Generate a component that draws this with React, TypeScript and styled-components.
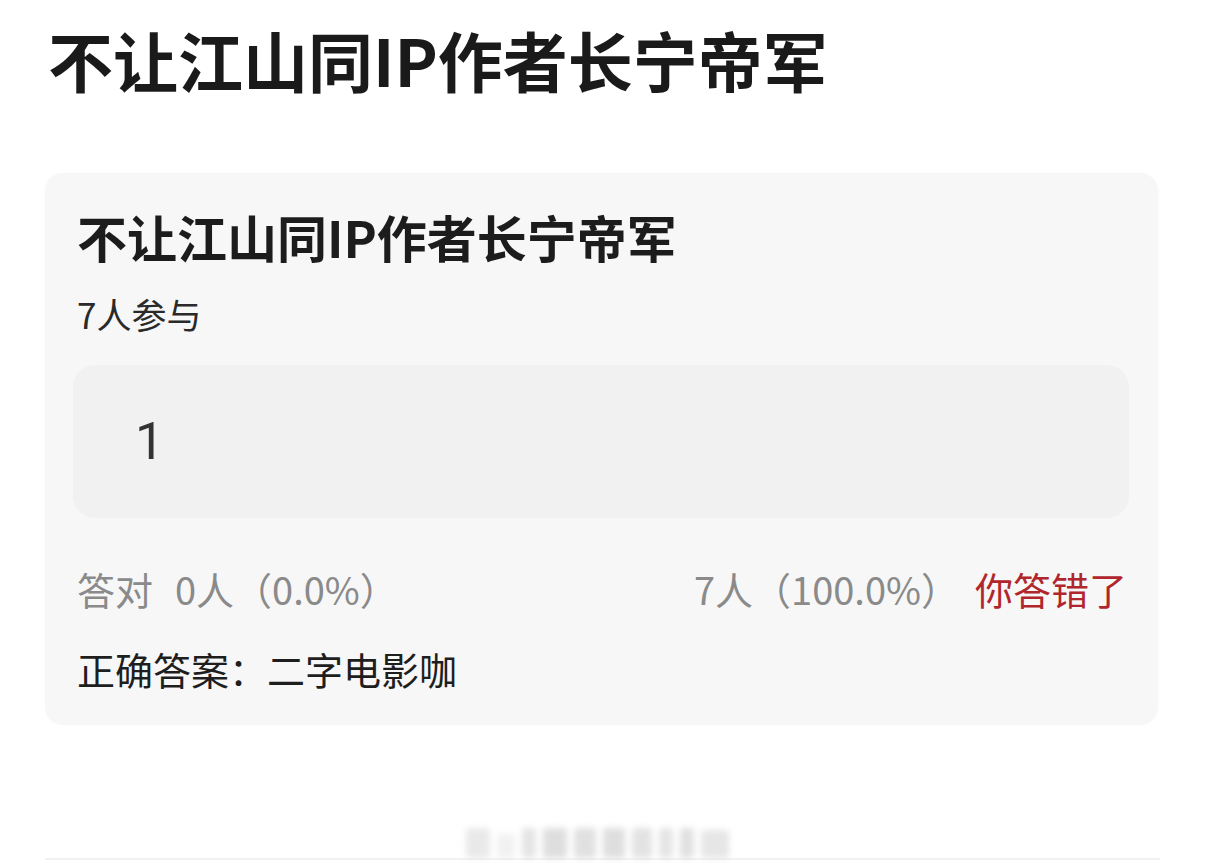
import React from "react";
import styled, { createGlobalStyle } from "styled-components";

const GlobalStyle = createGlobalStyle`
  html, body {
    margin: 0;
    padding: 0;
    background: #ffffff;
  }
  body {
    font-family: "Noto Sans CJK SC", "Noto Sans", sans-serif;
    color: #1f1f1f;
    -webkit-font-smoothing: antialiased;
  }
`;

const Page = styled.div`
  width: 1206px;
  height: 868px;
  overflow: hidden;
  box-sizing: border-box;
  padding-top: 19px;
  display: flex;
  flex-direction: column;
`;

const PageTitle = styled.h1`
  margin: 0 0 0 48px;
  font-size: 65px;
  line-height: 80px;
  font-weight: 600;
  color: #1a1a1a;
  letter-spacing: 0;
`;

const Card = styled.section`
  margin: 74px 48px 0 45px;
  box-sizing: border-box;
  height: 552px;
  padding: 33px 31px 31px 32px;
  background: #f7f7f7;
  border-radius: 18px;
  box-shadow: 0 0 4px rgba(0, 0, 0, 0.02);
  display: flex;
  flex-direction: column;
`;

const CardTitle = styled.h2`
  margin: 0;
  font-size: 50px;
  line-height: 60px;
  font-weight: 700;
  color: #1c1c1c;
`;

const Participants = styled.div`
  margin-top: 28px;
  font-size: 35px;
  line-height: 40px;
  color: #2a2a2a;
`;

const AnswerBox = styled.div`
  margin: 31px -2px 0 -4px;
  height: 153px;
  border-radius: 22px;
  background: #f1f1f1;
  display: flex;
  align-items: center;
  padding-left: 62px;
  font-family: "Roboto", "Noto Sans", sans-serif;
  font-size: 52px;
  color: #333333;
`;

const StatsRow = styled.div`
  margin-top: 49px;
  display: flex;
  align-items: center;
  justify-content: space-between;
  font-size: 38px;
  line-height: 44px;
  color: #8a8a8a;
`;

const StatGroup = styled.div<{ $gap: number }>`
  display: flex;
  align-items: center;
  gap: ${(p) => p.$gap}px;
`;

const Verdict = styled.span`
  color: #b1262c;
`;

const CorrectAnswer = styled.div`
  margin-top: 36px;
  font-size: 38px;
  line-height: 44px;
  color: #1e1e1e;
`;

const Footer = styled.div`
  margin: auto 46px 8px 45px;
  height: 36px;
  border-bottom: 2px solid #f2f2f2;
  display: flex;
  justify-content: center;
`;

const Watermark = styled.div`
  display: flex;
  align-items: flex-end;
  gap: 7px;
  margin-left: -10px;
  filter: blur(3px);
  opacity: 0.55;
`;

const WatermarkBlock = styled.span<{ $w: number; $h: number; $tone: string }>`
  display: block;
  width: ${(p) => p.$w}px;
  height: ${(p) => p.$h}px;
  background: ${(p) => p.$tone};
  border-radius: 3px;
`;

const watermarkBlocks = [
  { w: 24, h: 30, tone: "#d8d8d8" },
  { w: 18, h: 24, tone: "#e6e6e6" },
  { w: 14, h: 30, tone: "#cfcfcf" },
  { w: 24, h: 30, tone: "#c4c4c4" },
  { w: 22, h: 30, tone: "#c8c8c8" },
  { w: 22, h: 30, tone: "#c4c4c4" },
  { w: 20, h: 30, tone: "#cccccc" },
  { w: 14, h: 30, tone: "#d0d0d0" },
  { w: 14, h: 30, tone: "#c8c8c8" },
  { w: 28, h: 28, tone: "#d2d2d2" },
];

export default function App() {
  return (
    <>
      <GlobalStyle />
      <Page>
        <PageTitle>不让江山同IP作者长宁帝军</PageTitle>
        <Card>
          <CardTitle>不让江山同IP作者长宁帝军</CardTitle>
          <Participants>7人参与</Participants>
          <AnswerBox>1</AnswerBox>
          <StatsRow>
            <StatGroup $gap={22}>
              <span>答对</span>
              <span>0人（0.0%）</span>
            </StatGroup>
            <StatGroup $gap={16}>
              <span>7人（100.0%）</span>
              <Verdict>你答错了</Verdict>
            </StatGroup>
          </StatsRow>
          <CorrectAnswer>正确答案：二字电影咖</CorrectAnswer>
        </Card>
        <Footer>
          <Watermark>
            {watermarkBlocks.map((b, i) => (
              <WatermarkBlock key={i} $w={b.w} $h={b.h} $tone={b.tone} />
            ))}
          </Watermark>
        </Footer>
      </Page>
    </>
  );
}
